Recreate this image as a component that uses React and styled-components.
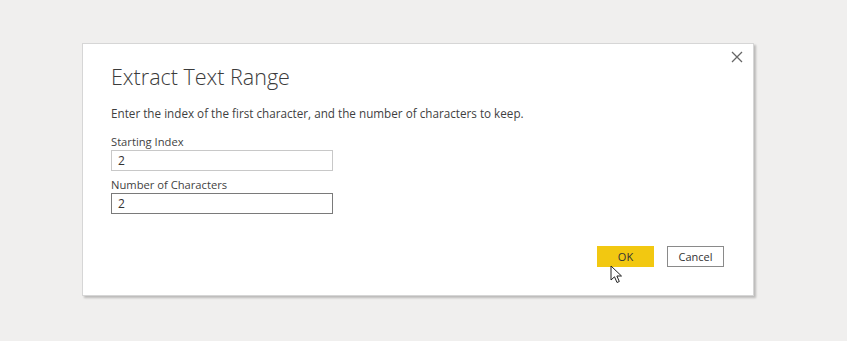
import React from "react";
import styled, { createGlobalStyle } from "styled-components";

const Global = createGlobalStyle`
  html, body {
    margin: 0;
    background: #f0efee;
    font-family: "Open Sans", "Noto Sans", sans-serif;
  }
`;

const Page = styled.div`
  width: 847px;
  height: 341px;
  padding: 43px 0 0 82px;
  box-sizing: border-box;
`;

const Dialog = styled.div`
  position: relative;
  width: 672px;
  height: 253px;
  box-sizing: border-box;
  background: #fff;
  border: 1px solid #d6d6d6;
  box-shadow: 2px 2px 2px rgba(0, 0, 0, 0.22);
  padding: 18px 29px 0 28px;
  display: flex;
  flex-direction: column;
`;

const Close = styled.button`
  position: absolute;
  top: 4px;
  right: 7px;
  width: 18px;
  height: 18px;
  padding: 0;
  border: 0;
  background: none;
  display: flex;
  align-items: center;
  justify-content: center;
`;

const Title = styled.h1`
  margin: 0;
  font-size: 21.5px;
  font-weight: 300;
  line-height: 30px;
  color: #3b3b3b;
`;

const Intro = styled.p`
  margin: 12px 0 0;
  font-size: 11.7px;
  line-height: 18px;
  color: #3f3f3f;
`;

const Field = styled.div`
  display: flex;
  flex-direction: column;
  margin-top: ${(p) => p.$top}px;
`;

const Label = styled.label`
  font-size: 11.2px;
  line-height: 16px;
  color: #3f3f3f;
`;

const Input = styled.div`
  width: 222px;
  height: 21px;
  box-sizing: border-box;
  border: 1px solid ${(p) => (p.$focus ? "#7a7a7a" : "#c8c8c8")};
  padding: 0 6px;
  font-size: 12px;
  line-height: 19px;
  color: #333;
`;

const Footer = styled.div`
  margin-top: auto;
  margin-bottom: 28px;
  display: flex;
  justify-content: flex-end;
  gap: 13px;
`;

const Button = styled.button`
  position: relative;
  width: 57px;
  height: 21px;
  box-sizing: border-box;
  font-family: inherit;
  font-size: 11px;
  color: #333;
  padding: 0;
  background: ${(p) => (p.$primary ? "#f2c811" : "#fff")};
  border: 1px solid ${(p) => (p.$primary ? "#f2c811" : "#8a8a8a")};
`;

const Cursor = styled.svg`
  position: absolute;
  left: 12px;
  top: 18px;
`;

export default function App() {
  return (
    <>
      <Global />
      <Page>
        <Dialog>
          <Close aria-label="Close">
            <svg width="12" height="12" viewBox="0 0 12 12">
              <path d="M1 1L11 11M11 1L1 11" stroke="#666" strokeWidth="1.3" />
            </svg>
          </Close>
          <Title>Extract Text Range</Title>
          <Intro>Enter the index of the first character, and the number of characters to keep.</Intro>
          <Field $top={12}>
            <Label>Starting Index</Label>
            <Input>2</Input>
          </Field>
          <Field $top={6}>
            <Label>Number of Characters</Label>
            <Input $focus>2</Input>
          </Field>
          <Footer>
            <Button $primary>
              OK
              <Cursor width="14" height="19" viewBox="0 0 14 19">
                <path
                  d="M1 1L1 15L4.5 11.8L7 17.5L9.3 16.5L6.9 11H11.5Z"
                  fill="#fff"
                  stroke="#222"
                  strokeWidth="1"
                  strokeLinejoin="round"
                />
              </Cursor>
            </Button>
            <Button>Cancel</Button>
          </Footer>
        </Dialog>
      </Page>
    </>
  );
}
